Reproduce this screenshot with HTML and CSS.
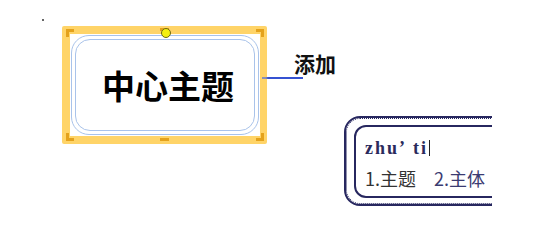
FILE: index.html
```html
<!DOCTYPE html>
<html lang="zh">

<head>
    <meta charset="UTF-8">
    <meta name="viewport" content="width=device-width, initial-scale=1.0">
    <title>思维导图</title>
    <link rel="stylesheet" href="styles.css">
</head>

<body>
    <div class="canvas">
        <span class="dot"></span>

        <div class="topic">
            <span class="mark mark-tl"></span>
            <span class="mark mark-tr"></span>
            <span class="mark mark-bl"></span>
            <span class="mark mark-br"></span>
            <span class="mark-top"></span>
            <span class="mark-bottom"></span>
            <div class="topic-card">
                <div class="topic-ring">
                    <div class="topic-body">中心主题</div>
                </div>
            </div>
            <span class="handle"></span>
        </div>

        <div class="link"></div>
        <div class="subtopic">添加</div>

        <div class="ime-clip">
            <div class="ime">
                <div class="ime-dots">
                    <div class="ime-inner">
                        <div class="ime-input">zhu<span class="quote">’</span>ti<span class="caret"></span></div>
                        <div class="ime-list">
                            <span class="cand">1.主题</span>
                            <span class="cand cand-2">2.主体</span>
                        </div>
                    </div>
                </div>
            </div>
        </div>
    </div>
</body>

</html>
```

FILE: styles.css
```css
body {
    margin: 0;
    background-color: #ffffff;
}

.canvas {
    position: relative;
    width: 549px;
    height: 242px;
    overflow: hidden;
    background-color: #ffffff;
}

.dot {
    position: absolute;
    left: 42px;
    top: 19px;
    width: 2px;
    height: 2px;
    background-color: #666;
}

/* central topic */
.topic {
    position: absolute;
    left: 62px;
    top: 26px;
    width: 205px;
    height: 118px;
    box-sizing: border-box;
    padding: 8px 7px 8px 8px;
    background-color: #ffd468;
    border-radius: 2px;
}

.topic-card {
    height: 100%;
    box-sizing: border-box;
    padding: 1px;
    background-color: #ffffff;
}

.topic-ring {
    height: 100%;
    box-sizing: border-box;
    padding: 3px;
    border: 1px solid #a9c3ea;
    border-radius: 18px;
}

.topic-body {
    height: 100%;
    box-sizing: border-box;
    border: 1px solid #a9c3ea;
    border-radius: 15px;
    display: flex;
    justify-content: center;
    align-items: center;
    padding-left: 6px;
    font-family: "Noto Sans CJK SC", sans-serif;
    font-weight: bold;
    font-size: 33px;
    color: #000000;
}

.mark {
    position: absolute;
    width: 5px;
    height: 5px;
    border: 0 solid #e4a21c;
}

.mark-tl {
    left: 4px;
    top: 3px;
    border-left-width: 3px;
    border-top-width: 3px;
}

.mark-tr {
    right: 3px;
    top: 3px;
    border-right-width: 3px;
    border-top-width: 3px;
}

.mark-bl {
    left: 4px;
    bottom: 3px;
    border-left-width: 3px;
    border-bottom-width: 3px;
}

.mark-br {
    right: 3px;
    bottom: 3px;
    border-right-width: 3px;
    border-bottom-width: 3px;
}

.mark-top,
.mark-bottom {
    position: absolute;
    left: 98px;
    width: 9px;
    height: 3px;
    background-color: #e4a21c;
}

.mark-top {
    top: 2px;
}

.mark-bottom {
    bottom: 3px;
}

.handle {
    position: absolute;
    left: 99px;
    top: 2px;
    width: 8px;
    height: 8px;
    border: 1px solid #6d6a14;
    border-radius: 50%;
    background-color: #f4ef10;
}

.link {
    position: absolute;
    left: 262px;
    top: 77px;
    width: 41px;
    height: 2px;
    background: linear-gradient(to right, #8a8fb4 0, #8a8fb4 4px, #3552d2 6px);
}

.subtopic {
    position: absolute;
    left: 294px;
    top: 48px;
    font-family: "Noto Sans CJK SC", sans-serif;
    font-weight: bold;
    font-size: 21px;
    color: #111111;
}

/* input method popup */
.ime-clip {
    position: absolute;
    left: 344px;
    top: 116px;
    width: 148px;
    height: 92px;
    overflow: hidden;
}

.ime {
    width: 200px;
    height: 90px;
    box-sizing: border-box;
    border: 2px solid #27275f;
    border-radius: 16px;
    background-color: #ffffff;
}

.ime-dots {
    height: 100%;
    box-sizing: border-box;
    border: 1px dotted #27275f;
    border-radius: 14px;
    padding: 6px 7px 5px 7px;
}

.ime-inner {
    height: 100%;
    box-sizing: border-box;
    border: 2px solid #27275f;
    border-radius: 12px;
    padding: 12px 0 0 9px;
}

.ime-input {
    display: flex;
    align-items: center;
    height: 18px;
    font-family: "Liberation Serif", serif;
    font-weight: bold;
    font-size: 18px;
    color: #2a2a5c;
    letter-spacing: 2px;
}

.quote {
    margin-right: 6px;
}

.caret {
    display: inline-block;
    width: 1px;
    height: 16px;
    margin-left: 1px;
    background-color: #222;
}

.ime-list {
    margin-top: 11px;
    font-family: "Noto Sans CJK SC", sans-serif;
    font-size: 18px;
    line-height: 20px;
    color: #333333;
    white-space: nowrap;
}

.cand-2 {
    margin-left: 14px;
    color: #3b3b72;
}
```
